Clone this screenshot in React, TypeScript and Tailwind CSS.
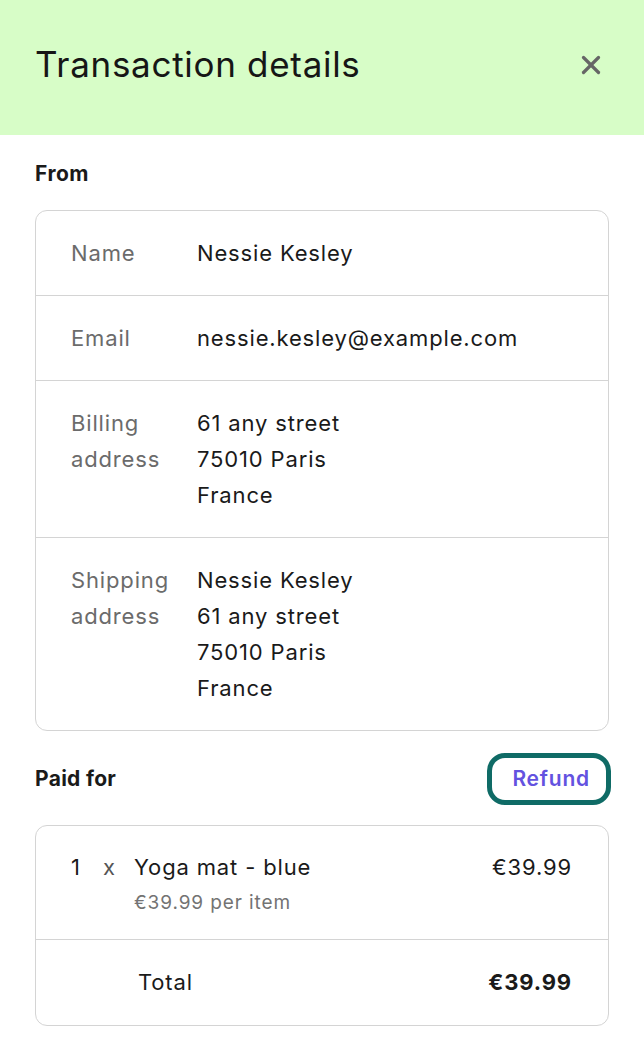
import { X } from 'lucide-react';

type Row = { label: string[]; value: string[] };

const fromRows: Row[] = [
  { label: ['Name'], value: ['Nessie Kesley'] },
  { label: ['Email'], value: ['nessie.kesley@example.com'] },
  { label: ['Billing', 'address'], value: ['61 any street', '75010 Paris', 'France'] },
  {
    label: ['Shipping', 'address'],
    value: ['Nessie Kesley', '61 any street', '75010 Paris', 'France'],
  },
];

export default function App() {
  return (
    <div className="w-[644px] min-h-[1038px] bg-white text-[#1a1a1a] font-['Inter',sans-serif]">
      {/* Header */}
      <div className="flex items-center justify-between h-[135px] bg-[#d7fdc7] pl-[35px] pr-[38px] pb-[6px]">
        <h1 className="text-[35px] font-normal tracking-[0.7px] text-[#161616]">Transaction details</h1>
        <button className="text-[#666666]">
          <X size={30} strokeWidth={2.6} />
        </button>
      </div>

      <div className="px-[35px]">
        {/* From */}
        <h2 className="pt-[25px] pb-[22px] text-[21px] leading-[28px] font-bold tracking-[0.5px]">From</h2>
        <div className="rounded-[12px] border border-[#d4d4d4]">
          {fromRows.map((row, i) => (
            <div
              key={i}
              className={`flex py-6 pl-[35px] text-[22px] leading-[36px] tracking-[0.85px] ${
                i > 0 ? 'border-t border-[#d4d4d4]' : ''
              }`}
            >
              <div className="w-[126px] shrink-0 text-[#6b6b6b]">
                {row.label.map((l) => (
                  <div key={l}>{l}</div>
                ))}
              </div>
              <div>
                {row.value.map((v, j) => (
                  <div key={j}>{v}</div>
                ))}
              </div>
            </div>
          ))}
        </div>

        {/* Paid for */}
        <div className="flex items-center justify-between mt-[22px] mb-[20px]">
          <h2 className="text-[21px] font-bold tracking-[0.3px]">Paid for</h2>
          <button className="mr-[-2px] rounded-[18px] border-[5px] border-[#0f6b66] pl-[20px] pr-[16px] py-[7px] text-[21px] leading-[28px] font-semibold tracking-[0.8px] text-[#6352e0]">
            Refund
          </button>
        </div>
        <div className="rounded-[12px] border border-[#d4d4d4] tracking-[0.85px]">
          <div className="flex items-start pt-[23px] pb-[18px] pl-[35px] pr-[36px]">
            <span className="w-[32px] text-[22px] leading-[36px]">1</span>
            <span className="w-[31px] text-[22px] leading-[36px] text-[#555555]">x</span>
            <div className="flex-1">
              <div className="text-[22px] leading-[36px]">Yoga mat - blue</div>
              <div className="text-[19px] leading-[36px] tracking-[0.9px] text-[#737373]">€39.99 per item</div>
            </div>
            <span className="text-[22px] leading-[36px]">€39.99</span>
          </div>
          <div className="flex items-center border-t border-[#d4d4d4] h-[86px] pl-[102px] pr-[36px] text-[22px]">
            <span className="flex-1">Total</span>
            <span className="font-bold">€39.99</span>
          </div>
        </div>
      </div>
    </div>
  );
}
